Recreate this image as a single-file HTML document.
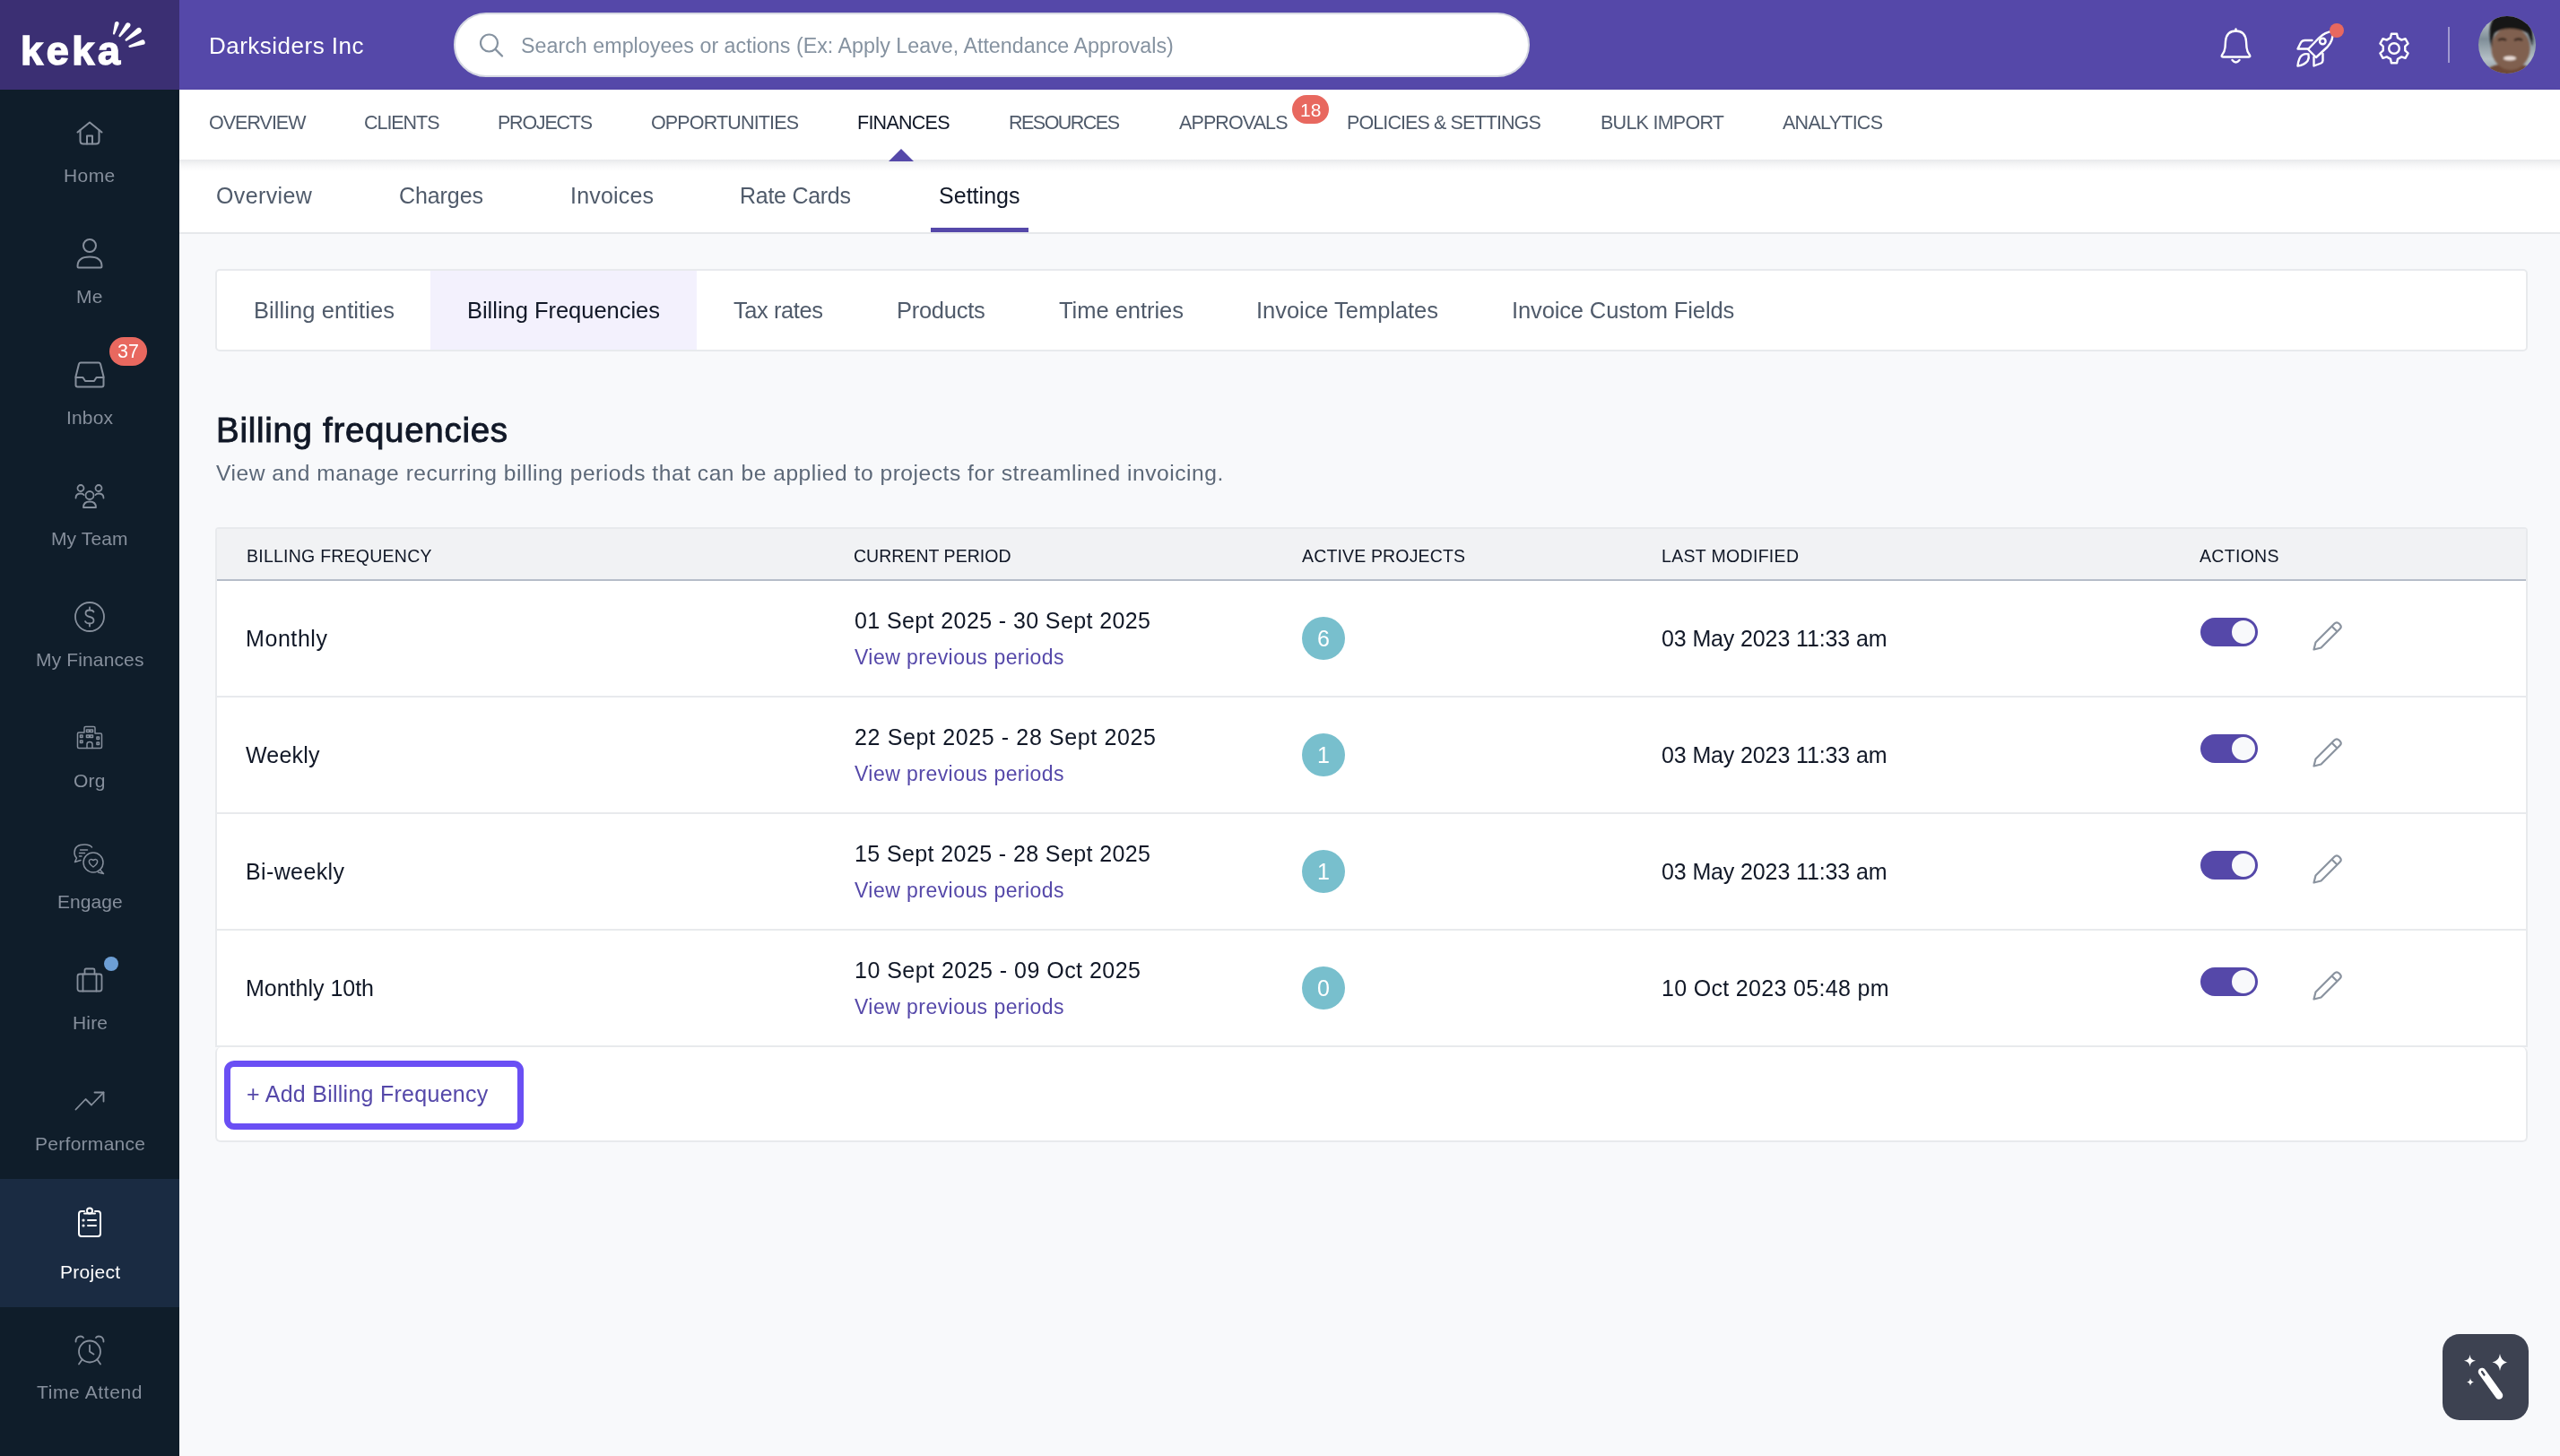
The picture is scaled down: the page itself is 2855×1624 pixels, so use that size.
<!DOCTYPE html><html><head><meta charset="utf-8"><style>
html,body{margin:0;padding:0;}
body{width:2855px;height:1624px;overflow:hidden;position:relative;background:#F8F9FB;font-family:"Liberation Sans",sans-serif;}
.t{position:absolute;white-space:nowrap;will-change:transform;}
svg{overflow:visible;}
</style></head><body>

<div style="position:absolute;left:0px;top:0px;width:200px;height:1624px;background:#0F1D2A"></div>
<div style="position:absolute;left:0px;top:0px;width:200px;height:100px;background:#3B2F73"></div>
<div style="position:absolute;left:0px;top:1315px;width:200px;height:143px;background:#1A2B42"></div>
<div style="position:absolute;left:200px;top:0px;width:2655px;height:100px;background:#5548A9"></div>
<div class="t" style="left:233.00px;top:38.49px;font-size:26px;line-height:26px;color:#FFFFFF;font-weight:400;letter-spacing:0.488px;">Darksiders Inc</div>
<div style="position:absolute;left:506px;top:14px;width:1200px;height:72px;background:#fff;border-radius:36px;box-sizing:border-box;border:2px solid #D5D8E2"></div>
<div class="t" style="left:581.00px;top:40.48px;font-size:23.3px;line-height:23.3px;color:#8592A0;font-weight:400;">Search employees or actions (Ex: Apply Leave, Attendance Approvals)</div>
<div style="position:absolute;left:200px;top:100px;width:2655px;height:78px;background:#fff;box-shadow:0 2px 6px rgba(0,0,0,0.06)"></div>
<div style="position:absolute;left:200px;top:178px;width:2655px;height:81px;background:#fff"></div>
<div style="position:absolute;left:200px;top:259px;width:2655px;height:2px;background:#E6E8EB"></div>
<div style="position:absolute;left:200px;top:178px;width:2655px;height:13px;background:linear-gradient(to bottom,#E8E9EC 0px,#EFF0F1 3px,#F8F8F9 7px,rgba(255,255,255,0) 13px)"></div>
<div style="position:absolute;left:240px;top:300px;width:2579px;height:92px;background:#fff;border:2px solid #E8EAED;border-radius:5px;box-sizing:border-box"></div>
<div style="position:absolute;left:480px;top:302px;width:297px;height:88px;background:#F3F1FD"></div>
<div style="position:absolute;left:240px;top:588px;width:2579px;height:580px;background:#fff;border:2px solid #E8EAED;box-sizing:border-box;border-radius:4px 4px 0 0"></div>
<div style="position:absolute;left:242px;top:590px;width:2575px;height:56px;background:#F1F2F4"></div>
<div style="position:absolute;left:242px;top:646px;width:2575px;height:2px;background:#B6BDC9"></div>
<div style="position:absolute;left:242px;top:776px;width:2575px;height:2px;background:#E8EAED"></div>
<div style="position:absolute;left:242px;top:906px;width:2575px;height:2px;background:#E8EAED"></div>
<div style="position:absolute;left:242px;top:1036px;width:2575px;height:2px;background:#E8EAED"></div>
<div style="position:absolute;left:240px;top:1168px;width:2579px;height:106px;background:#fff;border:2px solid #E8EAED;border-top:none;box-sizing:border-box;border-radius:6px 6px 6px 6px"></div>
<div class="t" style="left:232.50px;top:127.00px;font-size:21.5px;line-height:21.5px;color:#505B6B;font-weight:400;letter-spacing:-0.999px;">OVERVIEW</div>
<div class="t" style="left:405.50px;top:127.00px;font-size:21.5px;line-height:21.5px;color:#505B6B;font-weight:400;letter-spacing:-1.05px;">CLIENTS</div>
<div class="t" style="left:555.00px;top:127.00px;font-size:21.5px;line-height:21.5px;color:#505B6B;font-weight:400;letter-spacing:-1.24px;">PROJECTS</div>
<div class="t" style="left:726.00px;top:127.00px;font-size:21.5px;line-height:21.5px;color:#505B6B;font-weight:400;letter-spacing:-0.851px;">OPPORTUNITIES</div>
<div class="t" style="left:956.00px;top:127.00px;font-size:21.5px;line-height:21.5px;color:#111827;font-weight:400;letter-spacing:-0.744px;">FINANCES</div>
<div class="t" style="left:1125.00px;top:127.00px;font-size:21.5px;line-height:21.5px;color:#505B6B;font-weight:400;letter-spacing:-1.524px;">RESOURCES</div>
<div class="t" style="left:1314.50px;top:127.00px;font-size:21.5px;line-height:21.5px;color:#505B6B;font-weight:400;letter-spacing:-0.894px;">APPROVALS</div>
<div class="t" style="left:1502.00px;top:127.00px;font-size:21.5px;line-height:21.5px;color:#505B6B;font-weight:400;letter-spacing:-0.901px;">POLICIES &amp; SETTINGS</div>
<div class="t" style="left:1784.50px;top:127.00px;font-size:21.5px;line-height:21.5px;color:#505B6B;font-weight:400;letter-spacing:-0.736px;">BULK IMPORT</div>
<div class="t" style="left:1988.00px;top:127.00px;font-size:21.5px;line-height:21.5px;color:#505B6B;font-weight:400;letter-spacing:-0.735px;">ANALYTICS</div>
<svg style="position:absolute;left:991px;top:166px;" width="28" height="14" viewBox="0 0 28 14"><path d="M0 14 L14 0 L28 14 Z" fill="#5548A9"/></svg>
<div style="position:absolute;left:1441px;top:106px;width:41px;height:32px;background:#E8685F;border-radius:16px"></div>
<div class="t" style="left:1449.82px;top:112.22px;font-size:21px;line-height:21px;color:#fff;font-weight:400;">18</div>
<div class="t" style="left:241.00px;top:206.34px;font-size:25px;line-height:25px;color:#505B6B;font-weight:400;letter-spacing:0.366px;">Overview</div>
<div class="t" style="left:445.00px;top:206.34px;font-size:25px;line-height:25px;color:#505B6B;font-weight:400;letter-spacing:-0.083px;">Charges</div>
<div class="t" style="left:636.00px;top:206.34px;font-size:25px;line-height:25px;color:#505B6B;font-weight:400;letter-spacing:0.184px;">Invoices</div>
<div class="t" style="left:825.00px;top:206.34px;font-size:25px;line-height:25px;color:#505B6B;font-weight:400;letter-spacing:-0.271px;">Rate Cards</div>
<div class="t" style="left:1047.00px;top:206.34px;font-size:25px;line-height:25px;color:#111827;font-weight:400;letter-spacing:0.024px;">Settings</div>
<div style="position:absolute;left:1038px;top:254px;width:109px;height:5px;background:#5548A9"></div>
<div class="t" style="left:282.50px;top:334.41px;font-size:25.5px;line-height:25.5px;color:#505B6B;font-weight:400;letter-spacing:0.072px;">Billing entities</div>
<div class="t" style="left:521.00px;top:334.41px;font-size:25.5px;line-height:25.5px;color:#111827;font-weight:400;letter-spacing:-0.025px;">Billing Frequencies</div>
<div class="t" style="left:818.00px;top:334.41px;font-size:25.5px;line-height:25.5px;color:#505B6B;font-weight:400;letter-spacing:-0.432px;">Tax rates</div>
<div class="t" style="left:1000.00px;top:334.41px;font-size:25.5px;line-height:25.5px;color:#505B6B;font-weight:400;letter-spacing:-0.269px;">Products</div>
<div class="t" style="left:1180.50px;top:334.41px;font-size:25.5px;line-height:25.5px;color:#505B6B;font-weight:400;letter-spacing:-0.031px;">Time entries</div>
<div class="t" style="left:1401.00px;top:334.41px;font-size:25.5px;line-height:25.5px;color:#505B6B;font-weight:400;letter-spacing:-0.04px;">Invoice Templates</div>
<div class="t" style="left:1685.50px;top:334.41px;font-size:25.5px;line-height:25.5px;color:#505B6B;font-weight:400;letter-spacing:-0.13px;">Invoice Custom Fields</div>
<div class="t" style="left:241.00px;top:461.41px;font-size:38.5px;line-height:38.5px;color:#111827;font-weight:400;letter-spacing:0.697px;-webkit-text-stroke:0.9px #111827;">Billing frequencies</div>
<div class="t" style="left:241.00px;top:515.68px;font-size:24.6px;line-height:24.6px;color:#5C6878;font-weight:400;letter-spacing:0.524px;">View and manage recurring billing periods that can be applied to projects for streamlined invoicing.</div>
<div class="t" style="left:275.00px;top:610.99px;font-size:19.5px;line-height:19.5px;color:#111827;font-weight:400;letter-spacing:0.242px;">BILLING FREQUENCY</div>
<div class="t" style="left:952.00px;top:610.99px;font-size:19.5px;line-height:19.5px;color:#111827;font-weight:400;letter-spacing:0.026px;">CURRENT PERIOD</div>
<div class="t" style="left:1452.00px;top:610.99px;font-size:19.5px;line-height:19.5px;color:#111827;font-weight:400;letter-spacing:0.153px;">ACTIVE PROJECTS</div>
<div class="t" style="left:1852.50px;top:610.99px;font-size:19.5px;line-height:19.5px;color:#111827;font-weight:400;letter-spacing:0.32px;">LAST MODIFIED</div>
<div class="t" style="left:2452.50px;top:610.99px;font-size:19.5px;line-height:19.5px;color:#111827;font-weight:400;letter-spacing:0.304px;">ACTIONS</div>
<div class="t" style="left:274.00px;top:700.44px;font-size:25px;line-height:25px;color:#111827;font-weight:400;letter-spacing:0.577px;">Monthly</div>
<div class="t" style="left:952.50px;top:679.84px;font-size:25px;line-height:25px;color:#111827;font-weight:400;letter-spacing:0.396px;">01 Sept 2025 - 30 Sept 2025</div>
<div class="t" style="left:952.50px;top:721.53px;font-size:23px;line-height:23px;color:#5548A9;font-weight:400;letter-spacing:0.446px;">View previous periods</div>
<div style="position:absolute;left:1452px;top:688px;width:48px;height:48px;background:#78BFCD;border-radius:50%"></div>
<div class="t" style="left:1469.05px;top:699.84px;font-size:25px;line-height:25px;color:#fff;font-weight:400;">6</div>
<div class="t" style="left:1852.50px;top:699.84px;font-size:25px;line-height:25px;color:#111827;font-weight:400;letter-spacing:-0.125px;">03 May 2023 11:33 am</div>
<div style="position:absolute;left:2454px;top:689px;width:64px;height:32px;background:#5548A9;border-radius:16px"></div>
<div style="position:absolute;left:2487px;top:690px;width:30px;height:30px;background:#F8F9FB;border-radius:50%;box-sizing:border-box;border:2px solid #5548A9"></div>
<svg style="position:absolute;left:2579px;top:692px;" width="34" height="34" viewBox="0 0 34 34"><path d="M1.5 32.5 L3.5 24.5 L24.5 3.5 Q27 1 29.5 3.5 L30.5 4.5 Q33 7 30.5 9.5 L9.5 30.5 Z M21.5 6.5 L27.5 12.5" fill="none" stroke="#8A939F" stroke-width="2.2" stroke-linejoin="round"/></svg>
<div class="t" style="left:274.00px;top:830.44px;font-size:25px;line-height:25px;color:#111827;font-weight:400;letter-spacing:0.199px;">Weekly</div>
<div class="t" style="left:952.50px;top:809.84px;font-size:25px;line-height:25px;color:#111827;font-weight:400;letter-spacing:0.627px;">22 Sept 2025 - 28 Sept 2025</div>
<div class="t" style="left:952.50px;top:851.53px;font-size:23px;line-height:23px;color:#5548A9;font-weight:400;letter-spacing:0.446px;">View previous periods</div>
<div style="position:absolute;left:1452px;top:818px;width:48px;height:48px;background:#78BFCD;border-radius:50%"></div>
<div class="t" style="left:1469.05px;top:829.84px;font-size:25px;line-height:25px;color:#fff;font-weight:400;">1</div>
<div class="t" style="left:1852.50px;top:829.84px;font-size:25px;line-height:25px;color:#111827;font-weight:400;letter-spacing:-0.125px;">03 May 2023 11:33 am</div>
<div style="position:absolute;left:2454px;top:819px;width:64px;height:32px;background:#5548A9;border-radius:16px"></div>
<div style="position:absolute;left:2487px;top:820px;width:30px;height:30px;background:#F8F9FB;border-radius:50%;box-sizing:border-box;border:2px solid #5548A9"></div>
<svg style="position:absolute;left:2579px;top:822px;" width="34" height="34" viewBox="0 0 34 34"><path d="M1.5 32.5 L3.5 24.5 L24.5 3.5 Q27 1 29.5 3.5 L30.5 4.5 Q33 7 30.5 9.5 L9.5 30.5 Z M21.5 6.5 L27.5 12.5" fill="none" stroke="#8A939F" stroke-width="2.2" stroke-linejoin="round"/></svg>
<div class="t" style="left:274.00px;top:960.44px;font-size:25px;line-height:25px;color:#111827;font-weight:400;letter-spacing:0.379px;">Bi-weekly</div>
<div class="t" style="left:952.50px;top:939.84px;font-size:25px;line-height:25px;color:#111827;font-weight:400;letter-spacing:0.396px;">15 Sept 2025 - 28 Sept 2025</div>
<div class="t" style="left:952.50px;top:981.53px;font-size:23px;line-height:23px;color:#5548A9;font-weight:400;letter-spacing:0.446px;">View previous periods</div>
<div style="position:absolute;left:1452px;top:948px;width:48px;height:48px;background:#78BFCD;border-radius:50%"></div>
<div class="t" style="left:1469.05px;top:959.84px;font-size:25px;line-height:25px;color:#fff;font-weight:400;">1</div>
<div class="t" style="left:1852.50px;top:959.84px;font-size:25px;line-height:25px;color:#111827;font-weight:400;letter-spacing:-0.125px;">03 May 2023 11:33 am</div>
<div style="position:absolute;left:2454px;top:949px;width:64px;height:32px;background:#5548A9;border-radius:16px"></div>
<div style="position:absolute;left:2487px;top:950px;width:30px;height:30px;background:#F8F9FB;border-radius:50%;box-sizing:border-box;border:2px solid #5548A9"></div>
<svg style="position:absolute;left:2579px;top:952px;" width="34" height="34" viewBox="0 0 34 34"><path d="M1.5 32.5 L3.5 24.5 L24.5 3.5 Q27 1 29.5 3.5 L30.5 4.5 Q33 7 30.5 9.5 L9.5 30.5 Z M21.5 6.5 L27.5 12.5" fill="none" stroke="#8A939F" stroke-width="2.2" stroke-linejoin="round"/></svg>
<div class="t" style="left:274.00px;top:1090.44px;font-size:25px;line-height:25px;color:#111827;font-weight:400;letter-spacing:-0.013px;">Monthly 10th</div>
<div class="t" style="left:952.50px;top:1069.84px;font-size:25px;line-height:25px;color:#111827;font-weight:400;letter-spacing:0.473px;">10 Sept 2025 - 09 Oct 2025</div>
<div class="t" style="left:952.50px;top:1111.53px;font-size:23px;line-height:23px;color:#5548A9;font-weight:400;letter-spacing:0.446px;">View previous periods</div>
<div style="position:absolute;left:1452px;top:1078px;width:48px;height:48px;background:#78BFCD;border-radius:50%"></div>
<div class="t" style="left:1469.05px;top:1089.84px;font-size:25px;line-height:25px;color:#fff;font-weight:400;">0</div>
<div class="t" style="left:1852.50px;top:1089.84px;font-size:25px;line-height:25px;color:#111827;font-weight:400;letter-spacing:0.322px;">10 Oct 2023 05:48 pm</div>
<div style="position:absolute;left:2454px;top:1079px;width:64px;height:32px;background:#5548A9;border-radius:16px"></div>
<div style="position:absolute;left:2487px;top:1080px;width:30px;height:30px;background:#F8F9FB;border-radius:50%;box-sizing:border-box;border:2px solid #5548A9"></div>
<svg style="position:absolute;left:2579px;top:1082px;" width="34" height="34" viewBox="0 0 34 34"><path d="M1.5 32.5 L3.5 24.5 L24.5 3.5 Q27 1 29.5 3.5 L30.5 4.5 Q33 7 30.5 9.5 L9.5 30.5 Z M21.5 6.5 L27.5 12.5" fill="none" stroke="#8A939F" stroke-width="2.2" stroke-linejoin="round"/></svg>
<div style="position:absolute;left:249.5px;top:1182.5px;width:334px;height:77px;border:7px solid #6A4FF4;border-radius:11px;box-sizing:border-box;background:#fff"></div>
<div class="t" style="left:274.50px;top:1208.34px;font-size:25px;line-height:25px;color:#5548A9;font-weight:400;letter-spacing:0.268px;">+ Add Billing Frequency</div>
<div style="position:absolute;left:2724px;top:1488px;width:96px;height:96px;background:#3D4251;border-radius:19px"></div>
<svg style="position:absolute;left:85px;top:135px;" width="30" height="27" viewBox="0 0 30 27"><g fill="none" stroke="#868F9C" stroke-width="2" stroke-linecap="round" stroke-linejoin="round"><path d="M1.5 12.5 L15 1.5 L28.5 12.5"/><path d="M4.5 10 V22 Q4.5 25.5 8 25.5 H22 Q25.5 25.5 25.5 22 V10"/><path d="M12 25.5 V16.5 H18 V25.5"/></g></svg>
<div class="t" style="left:71.35px;top:185.22px;font-size:21px;line-height:21px;color:#868F9C;font-weight:400;letter-spacing:0.427px;">Home</div>
<svg style="position:absolute;left:85px;top:266px;" width="30" height="34" viewBox="0 0 30 34"><g fill="none" stroke="#868F9C" stroke-width="2" stroke-linecap="round" stroke-linejoin="round"><circle cx="15" cy="8" r="7"/><path d="M2.5 32.5 Q1.5 32.5 1.5 31 Q1.5 20.5 15 20.5 Q28.5 20.5 28.5 31 Q28.5 32.5 27.5 32.5 Z"/></g></svg>
<div class="t" style="left:85.25px;top:320.22px;font-size:21px;line-height:21px;color:#868F9C;font-weight:400;letter-spacing:0.327px;">Me</div>
<svg style="position:absolute;left:83px;top:403px;" width="34" height="30" viewBox="0 0 34 30"><g fill="none" stroke="#868F9C" stroke-width="2" stroke-linecap="round" stroke-linejoin="round"><path d="M7 1.5 H27 Q28.5 1.5 29 3 L32.5 17 V26.5 Q32.5 28.5 30.5 28.5 H3.5 Q1.5 28.5 1.5 26.5 V17 L5 3 Q5.5 1.5 7 1.5 Z"/><path d="M1.5 18 H9.5 L12 22 H22 L24.5 18 H32.5"/></g></svg>
<div style="position:absolute;left:122px;top:376px;width:42px;height:32px;background:#E8685F;border-radius:16px"></div>
<div class="t" style="left:131.04px;top:382.30px;font-size:21.5px;line-height:21.5px;color:#fff;font-weight:400;">37</div>
<div class="t" style="left:74.00px;top:455.22px;font-size:21px;line-height:21px;color:#868F9C;font-weight:400;letter-spacing:0.157px;">Inbox</div>
<svg style="position:absolute;left:83px;top:540px;" width="34" height="27" viewBox="0 0 34 27"><g fill="none" stroke="#868F9C" stroke-width="1.8" stroke-linecap="round" stroke-linejoin="round"><circle cx="17" cy="12.5" r="4.5"/><path d="M10 26 Q10 19.5 17 19.5 Q24 19.5 24 26 Z"/><circle cx="7" cy="4.5" r="3.5"/><circle cx="27" cy="4.5" r="3.5"/><path d="M1.5 15.5 Q1.5 10.5 7 10.5 Q9.5 10.5 10.5 12"/><path d="M32.5 15.5 Q32.5 10.5 27 10.5 Q24.5 10.5 23.5 12"/></g></svg>
<div class="t" style="left:57.25px;top:590.22px;font-size:21px;line-height:21px;color:#868F9C;font-weight:400;letter-spacing:0.117px;">My Team</div>
<svg style="position:absolute;left:83px;top:671px;" width="34" height="34" viewBox="0 0 34 34"><g fill="none" stroke="#868F9C" stroke-width="1.8" stroke-linecap="round" stroke-linejoin="round"><circle cx="17" cy="17" r="16"/><path d="M21.5 11.5 Q20.5 9.5 17 9.5 Q12.5 9.5 12.5 13 Q12.5 16 17 17 Q21.5 18 21.5 21 Q21.5 24.5 17 24.5 Q13 24.5 12 22"/><path d="M17 6.5 V9.5 M17 24.5 V27.5"/></g></svg>
<div class="t" style="left:39.80px;top:725.22px;font-size:21px;line-height:21px;color:#868F9C;font-weight:400;letter-spacing:0.136px;">My Finances</div>
<svg style="position:absolute;left:85px;top:809px;" width="30" height="27" viewBox="0 0 30 27"><g fill="none" stroke="#868F9C" stroke-width="1.5" stroke-linecap="round" stroke-linejoin="round"><path d="M1.5 9.5 Q1.5 8 3 8 H9 V3 Q9 1.5 10.5 1.5 H19.5 Q21 1.5 21 3 V9 H27 Q28.5 9 28.5 10.5 V24 Q28.5 25.5 27 25.5 H3 Q1.5 25.5 1.5 24 Z"/><path d="M12 25.5 V21 Q12 18.5 15 18.5 Q18 18.5 18 21 V25.5"/><rect x="11.5" y="5" width="3" height="2.5"/><rect x="15.5" y="5" width="3" height="2.5"/><rect x="11.5" y="11" width="3" height="2.5"/><rect x="15.5" y="11" width="3" height="2.5"/><rect x="4.5" y="11" width="2.5" height="2.5"/><rect x="4.5" y="17" width="2.5" height="2.5"/><rect x="23" y="13" width="2.5" height="2.5"/><rect x="23" y="19" width="2.5" height="2.5"/></g></svg>
<div class="t" style="left:82.25px;top:859.72px;font-size:21px;line-height:21px;color:#868F9C;font-weight:400;letter-spacing:0.247px;">Org</div>
<svg style="position:absolute;left:82px;top:941px;" width="35" height="35" viewBox="0 0 35 35"><g fill="none" stroke="#868F9C" stroke-width="1.5" stroke-linecap="round" stroke-linejoin="round"><path d="M20.5 4 Q18 1 12.5 1 Q1 1 1 10 Q1 14 3.5 16 L1.5 20.5 L8 18.5"/><path d="M7.5 7 H15.5 M6.5 10.5 H12.5 M6.5 14 H9"/><circle cx="22" cy="21" r="11"/><path d="M29.5 29 L33.5 33.5 L27.5 32"/><path d="M22 26 Q16.5 22 17.5 19 Q18.5 16.5 22 18.5 Q25.5 16.5 26.5 19 Q27.5 22 22 26 Z"/></g></svg>
<div class="t" style="left:63.70px;top:995.22px;font-size:21px;line-height:21px;color:#868F9C;font-weight:400;letter-spacing:0.039px;">Engage</div>
<svg style="position:absolute;left:85px;top:1079px;" width="30" height="28" viewBox="0 0 30 28"><g fill="none" stroke="#868F9C" stroke-width="1.8" stroke-linecap="round" stroke-linejoin="round"><rect x="1.5" y="7.5" width="27" height="19" rx="2.5"/><path d="M9.5 7.5 V3 Q9.5 1.5 11 1.5 H19 Q20.5 1.5 20.5 3 V7.5"/><path d="M7.5 7.5 V26.5 M22.5 7.5 V26.5"/></g></svg>
<div style="position:absolute;left:116px;top:1067px;width:16px;height:16px;background:#6D9FD5;border-radius:50%"></div>
<div class="t" style="left:80.50px;top:1129.72px;font-size:21px;line-height:21px;color:#868F9C;font-weight:400;letter-spacing:0.165px;">Hire</div>
<svg style="position:absolute;left:83px;top:1217px;" width="34" height="22" viewBox="0 0 34 22"><g fill="none" stroke="#868F9C" stroke-width="1.8" stroke-linecap="round" stroke-linejoin="round"><path d="M1.5 20.5 L12.5 9 L19 15.5 L32.5 1.5"/><path d="M22.5 1.5 H32.5 V11.5"/></g></svg>
<div class="t" style="left:38.50px;top:1265.22px;font-size:21px;line-height:21px;color:#868F9C;font-weight:400;letter-spacing:0.278px;">Performance</div>
<svg style="position:absolute;left:87px;top:1346px;" width="26" height="34" viewBox="0 0 26 34"><g fill="none" stroke="#FFFFFF" stroke-width="2" stroke-linecap="round" stroke-linejoin="round"><path d="M7 5 H4 Q1 5 1 8 V30 Q1 33 4 33 H22 Q25 33 25 30 V8 Q25 5 22 5 H19"/><path d="M7 7.5 H19"/><circle cx="13" cy="4.5" r="3"/><path d="M11 15 H20 M11 21 H20"/><circle cx="6" cy="15" r="0.6"/><circle cx="6" cy="21" r="0.6"/></g></svg>
<div class="t" style="left:66.50px;top:1408.22px;font-size:21px;line-height:21px;color:#FFFFFF;font-weight:400;letter-spacing:0.274px;">Project</div>
<svg style="position:absolute;left:83px;top:1489px;" width="34" height="34" viewBox="0 0 34 34"><g fill="none" stroke="#868F9C" stroke-width="1.8" stroke-linecap="round" stroke-linejoin="round"><circle cx="17" cy="18.5" r="12"/><path d="M17 11.5 V18.5 L21.5 21.5"/><path d="M1.5 7.5 Q1.5 1.5 7 1.5 Q9 1.5 10 3"/><path d="M32.5 7.5 Q32.5 1.5 27 1.5 Q25 1.5 24 3"/><path d="M8.5 27.5 L5 32.5 M25.5 27.5 L29 32.5"/></g></svg>
<div class="t" style="left:41.25px;top:1542.22px;font-size:21px;line-height:21px;color:#868F9C;font-weight:400;letter-spacing:0.622px;">Time Attend</div>
<div class="t" style="left:22.50px;top:33.91px;font-size:45px;line-height:45px;color:#FFFFFF;font-weight:700;letter-spacing:3.631px;-webkit-text-stroke:1.5px #fff;">keka</div>
<svg style="position:absolute;left:0px;top:0px;" width="200" height="100" viewBox="0 0 200 100"><path d="M128.06 37.81 L132.60 26.98 A2.40 2.40 0 0 0 128.00 25.62 L125.94 37.19 A1.10 1.10 0 0 0 128.06 37.81 Z" fill="#fff"/><path d="M134.56 40.73 L144.93 29.69 A2.80 2.80 0 0 0 140.47 26.31 L132.64 39.27 A1.20 1.20 0 0 0 134.56 40.73 Z" fill="#fff"/><path d="M141.58 45.54 L156.60 36.40 A3.00 3.00 0 0 0 153.00 31.60 L140.02 43.46 A1.30 1.30 0 0 0 141.58 45.54 Z" fill="#fff"/><path d="M145.09 52.94 L159.84 49.87 A2.80 2.80 0 0 0 158.16 44.53 L144.31 50.46 A1.30 1.30 0 0 0 145.09 52.94 Z" fill="#fff"/></svg>
<svg style="position:absolute;left:534px;top:36.5px;" width="28" height="27" viewBox="0 0 28 27"><circle cx="11.5" cy="11" r="9.5" fill="none" stroke="#8592A0" stroke-width="2.2"/><path d="M18.5 18 L26 25.5" stroke="#8592A0" stroke-width="2.4" stroke-linecap="round"/></svg>
<svg style="position:absolute;left:2477px;top:31px;" width="34" height="42" viewBox="0 0 34 42"><g fill="none" stroke="#FFFFFF" stroke-width="2.4" stroke-linecap="round" stroke-linejoin="round"><path d="M16.5 1.5 V3.5"/><path d="M16.5 3.5 Q27 3.5 28 15 L28.5 22 Q29 27 32 30.5 Q33 32.5 31 32.5 H2 Q0 32.5 1 30.5 Q4 27 4.5 22 L5 15 Q6 3.5 16.5 3.5 Z"/><path d="M12.5 36 Q16.5 41 20.5 36"/></g></svg>
<svg style="position:absolute;left:2561px;top:33px;" width="42" height="42" viewBox="0 0 42 42"><g fill="none" stroke="#FFFFFF" stroke-width="2.4" stroke-linecap="round" stroke-linejoin="round"><path d="M40.5 2 Q41.5 12 34.5 19.5 L22 31 L13 22 L25 9.5 Q32 2.5 40.5 2 Z"/><circle cx="29.3" cy="13" r="3.3"/><path d="M17.5 12 H9.5 Q6.5 12 5 14.5 L1.5 21.5 H13"/><path d="M29.5 27 V34.5 Q29.5 36.5 27.5 37.5 L19.5 40.5 V30.5"/><path d="M1.5 40.5 Q2.5 31 6.5 28.5 Q10 26.5 13.5 27.5 Q14.5 31.5 12.5 35 Q9 39.5 1.5 40.5 Z"/></g></svg>
<div style="position:absolute;left:2598px;top:26px;width:16px;height:16px;background:#E8685F;border-radius:50%"></div>
<svg style="position:absolute;left:2652px;top:36px;" width="36" height="36" viewBox="0 0 36 36"><path d="M14.01 6.15 L14.91 1.79 L21.09 1.79 L21.99 6.15 L26.27 8.62 L30.49 7.22 L33.58 12.57 L30.25 15.53 L30.25 20.47 L33.58 23.43 L30.49 28.78 L26.27 27.38 L21.99 29.85 L21.09 34.21 L14.91 34.21 L14.01 29.85 L9.73 27.38 L5.51 28.78 L2.42 23.43 L5.75 20.47 L5.75 15.53 L2.42 12.57 L5.51 7.22 L9.73 8.62 Z" fill="none" stroke="#FFFFFF" stroke-width="2.4" stroke-linejoin="round"/><circle cx="18" cy="18" r="5.8" fill="none" stroke="#FFFFFF" stroke-width="2.4"/></svg>
<div style="position:absolute;left:2730px;top:30px;width:2px;height:40px;background:rgba(255,255,255,0.45)"></div>
<svg style="position:absolute;left:2764px;top:18px;" width="64" height="64" viewBox="0 0 64 64"><defs><clipPath id="av"><circle cx="32" cy="32" r="32"/></clipPath><linearGradient id="bg" x1="0" y1="0" x2="0" y2="1"><stop offset="0" stop-color="#C9D0D4"/><stop offset="0.4" stop-color="#7F8E98"/><stop offset="0.75" stop-color="#B5C0C6"/><stop offset="1" stop-color="#8E9AA2"/></linearGradient><filter id="bl" x="-10%" y="-10%" width="120%" height="120%"><feGaussianBlur stdDeviation="1.3"/></filter></defs><g clip-path="url(#av)"><rect width="64" height="64" fill="url(#bg)"/><g filter="url(#bl)"><path d="M8 60 Q20 52 34 54 Q50 52 62 60 L62 70 L8 70 Z" fill="#6E4A37"/><ellipse cx="36" cy="36" rx="21.5" ry="24" fill="#80604F"/><path d="M15 36 Q5 -6 36 -4 Q64 -4 60 34 Q59 26 55 19 Q46 14 35 14 Q24 14 18 19 Q15 26 15 36 Z" fill="#151312"/><path d="M22 27 Q27 24 31 27 M40 27 Q45 24 49 27" stroke="#2E1F18" stroke-width="2.5" fill="none"/><ellipse cx="35" cy="47" rx="7" ry="2.6" fill="#E9DCD6"/></g></g></svg>
<svg style="position:absolute;left:2724px;top:1488px;" width="96" height="96" viewBox="0 0 96 96"><g fill="#fff"><path d="M64 22 Q65 30 72.5 31.5 Q65 33 64 41 Q63 33 55.5 31.5 Q63 30 64 22 Z"/><path d="M30.5 23 Q31 29 37 29.8 Q31 30.6 30.5 36.5 Q30 30.6 24 29.8 Q30 29 30.5 23 Z"/><path d="M31 49 Q31.3 53 35 53.5 Q31.3 54 31 58 Q30.7 54 27 53.5 Q30.7 53 31 49 Z"/></g><path d="M44 42 L63 68.5" stroke="#fff" stroke-width="8.5" stroke-linecap="round"/><path d="M44 42 L46.5 45.5" stroke="#3D4251" stroke-width="2.2" stroke-linecap="round"/></svg>
</body></html>
